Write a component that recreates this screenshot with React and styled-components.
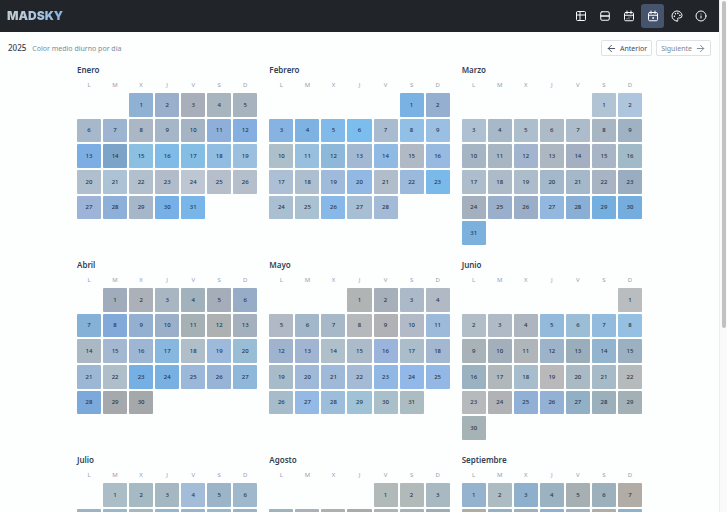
import styled, { createGlobalStyle, css } from 'styled-components';
import { ArrowLeft, ArrowRight, Info, Palette } from 'lucide-react';
import { TbTable } from 'react-icons/tb';

const GlobalStyle = createGlobalStyle`
	* {
		box-sizing: border-box;
	}

	body {
		margin: 0;
		background: #fdfefe;
		color: #334155;
		font-family: 'Noto Sans', 'Open Sans', sans-serif;
		font-size: 7px;
	}
`;

const Viewport = styled.div`
	display: flex;
	height: 100vh;
	overflow: hidden;
`;

const Page = styled.div`
	flex: 1;
	min-width: 0;
	overflow-y: auto;
	scrollbar-width: none;
`;

const ScrollTrack = styled.div`
	width: 8px;
	padding: 1px 1px 0 2px;
	background: #fafafa;
	border-left: 1px solid #ededed;
`;

const ScrollThumb = styled.div`
	height: 64%;
	background: #c1c1c1;
	border-radius: 3px;
`;

const Navbar = styled.header`
	display: flex;
	align-items: center;
	justify-content: space-between;
	height: 32px;
	padding: 0 7px;
	background: #212529;
`;

const Logo = styled.a`
	font-family: Inter, sans-serif;
	font-size: 12px;
	font-weight: 900;
	line-height: 16px;
	text-decoration: none;
	color: transparent;
	background: linear-gradient(90deg, #c3cbd2, #a9c6e0 60%, #7fb2e4);
	background-clip: text;
`;

const Nav = styled.nav`
	display: flex;
	gap: 1px;
`;

const NavButton = styled.button`
	display: grid;
	place-items: center;
	width: 23px;
	height: 24px;
	padding: 0;
	border: none;
	border-radius: 3px;
	color: #f8fafc;
	background: ${({ $active }) => ($active ? '#45546c' : 'transparent')};
	cursor: pointer;

	svg {
		width: 12px;
		height: 12px;
	}
`;

const Toolbar = styled.div`
	display: flex;
	align-items: center;
	justify-content: space-between;
	padding: 8px;
`;

const Heading = styled.div`
	display: flex;
	align-items: baseline;
	gap: 6px;
`;

const Year = styled.h1`
	margin: 0;
	font-size: 8px;
	font-weight: 500;
	line-height: 16px;
`;

const Subtitle = styled.span`
	color: #7b8a9c;
`;

const Pager = styled.div`
	display: flex;
	gap: 4px;
`;

const PagerButton = styled.button`
	display: flex;
	align-items: center;
	gap: 3px;
	height: 16px;
	padding: 0 4px;
	font: inherit;
	color: #3f4a57;
	background: #fff;
	border: 1px solid #dee2e6;
	border-radius: 2px;
	cursor: pointer;

	svg {
		width: 11px;
		height: 11px;
	}

	&:disabled {
		color: #7d858e;
		cursor: default;
	}
`;

const Months = styled.main`
	display: grid;
	grid-template-columns: repeat(3, 1fr);
	gap: 14px 12px;
	max-width: 565px;
	margin: 0 auto;
`;

const Month = styled.section`
	min-width: 0;
`;

const MonthName = styled.h2`
	margin: 0 0 4px;
	font-size: 8px;
	font-weight: 600;
	line-height: 12px;
`;

const Calendar = styled.table`
	display: block;

	tr {
		display: contents;
	}
`;

const weekGrid = css`
	display: grid;
	grid-template-columns: repeat(7, 1fr);
	gap: 2px;
`;

const WeekHead = styled.thead`
	${weekGrid}
	margin-bottom: 2px;
`;

const Weekday = styled.th`
	padding: 0;
	font-size: 6px;
	font-weight: 400;
	line-height: 11px;
	text-align: center;
	color: #94a0af;
`;

const Weeks = styled.tbody`
	${weekGrid}
	grid-template-rows: repeat(6, 1fr);
	height: 152px;
`;

const Day = styled.td`
	display: grid;
	place-items: center;
	padding: 0;
	grid-column: ${({ $column }) => $column};
	font-size: 6px;
	font-weight: 500;
	line-height: 8px;
	color: #26384d;
	background: ${({ $color }) => $color};
	border-radius: 1px;
`;

const StrokeIcon = styled.svg.attrs({ viewBox: '0 0 24 24' })`
	fill: none;
	stroke: currentColor;
	stroke-width: 2;
	stroke-linecap: round;
	stroke-linejoin: round;
`;

function RowsIcon() {
	return (
		<StrokeIcon>
			<rect x="3.5" y="3.5" width="17" height="17" rx="2.5" />
			<path d="M3.5 12h17" strokeWidth="3" />
		</StrokeIcon>
	);
}

function MonthIcon() {
	return (
		<StrokeIcon>
			<rect x="3" y="5" width="18" height="16.5" rx="2.5" />
			<path d="M8 2v5M16 2v5M3 10.5h18" />
			<path d="M12 14h.01M16 14h.01M8 17.5h.01M12 17.5h.01" />
		</StrokeIcon>
	);
}

function YearIcon() {
	return (
		<StrokeIcon>
			<rect x="3" y="5" width="18" height="16.5" rx="2.5" />
			<path d="M8 2v5M16 2v5M3 10.5h18" />
			<circle cx="12" cy="16" r="1" />
		</StrokeIcon>
	);
}

const WEEKDAYS = ['L', 'M', 'X', 'J', 'V', 'S', 'D'];

const VIEWS = [
	{ label: 'Tabla', icon: TbTable },
	{ label: 'Filas', icon: RowsIcon },
	{ label: 'Mes', icon: MonthIcon },
	{ label: 'Año', icon: YearIcon, active: true },
	{ label: 'Colores', icon: Palette },
	{ label: 'Información', icon: Info },
];

// start: weekday of day 1 (0 = lunes); colors: daytime mean, one per day
const MONTHS = [
	{
		name: 'Enero',
		start: 2,
		colors: `8fb1d3 99afcc a9afba a9b5be a8b4bd
			a7b8cb 9eb5d1 abb7c5 a5b6c8 a5b4c5 8fafdb 85aee1
			7caee4 7ba4c8 8bc0e3 80bae6 85bee4 91bde2 9bbfdf
			afbfce abc3d5 b2bfcd b2bbca bec6d3 b7becb b4bfcb
			9db3d8 8dafd8 a6b7ca 77b0e7 78b5e9`,
	},
	{
		name: 'Febrero',
		start: 5,
		colors: `7ab2e3 94afcf
			87b3e2 7eb2e3 7fbaea 7bbdec a9bccf 91bfe5 9bbfe3
			adbfc9 98bfdd 8db8d9 a2b8d3 90b9e3 b1b9c4 98bae0
			adbfd4 adbfce 9fbada 92b9e3 b1bdca 9bb9da 7abaea
			aabfd2 aac1d2 87b8e8 a7bfd5 a3bbd7`,
	},
	{
		name: 'Marzo',
		start: 5,
		colors: `b1c4d4 aec6dd
			adc1d2 a7b9c8 adbecd adbbc9 acbccb a8b5c2 9fb2c3
			a5b5c3 a8b6c3 a3b4ce adb7c1 a4b0c2 a8b5c7 a1bac8
			adbdcb adbac8 acbccb a3b8ca a5b8c9 a8b4c4 9aacc0
			a5b0bf 9aafcc 9baec8 92b8df 8aafd7 75afe0 75addf
			7cb1de`,
	},
	{
		name: 'Abril',
		start: 1,
		colors: `a0acbb acb0b9 a8b6c2 a1b2bc a5adb8 96acc7
			86b1d6 82a9da 93b0d0 9bafc9 a6b1b6 adb1b2 a4b0bd
			aab8c3 a4b8d2 9db6d4 87b6df b0bec9 9db9dc 9abdd6
			9bb7d3 afbec8 75afe3 78b0e2 9bb7da 97b4d6 8fb7d9
			7ca9db a5a9ad a5a8aa`,
	},
	{
		name: 'Mayo',
		start: 3,
		colors: `b1b4b4 a7afba acb9c8 b1b9c4
			b1b9c5 a3b7ca a7b8c9 b6b9bc b0b2b5 b2bac7 9dbadb
			9fb3cf a1b5d3 afc0ca abbbca 9bb4dc abbdca a3b7d1
			a7bbc9 a1b9d8 9fb9d9 a5bbd5 91b7e5 91b8e8 93b8e5
			a7bccb 93b9e4 9dbeda 9fc2d7 a9bfca abbdc3`,
	},
	{
		name: 'Junio',
		start: 6,
		colors: `b9bdbf
			b1bec8 b0bac6 adb5be 93badb 9bbed6 93bbdd 95c0e1
			a7b3b9 a3afbb afb5b8 9db3c9 99adbb 93b4cf 9bb1c2
			9bb2c0 b1b8bb a7bdcb b9b8bb a9bac5 a7bac8 b5babd
			b7babd b1b2b5 91b0d5 92b1d4 91b0c5 9bb0ba a3b1b7
			a5b3b7`,
	},
	{
		name: 'Julio',
		start: 1,
		colors: `abbec8 a6bac4 a5b8c1 a3bdd8 9bb4c8 9fb8cc
			98b4c6 9cb7cc a5b7c1 98b5cd 98b5cb 9bb7cb 9ab3c5`,
	},
	{
		name: 'Agosto',
		start: 4,
		colors: `b1bab9 b1bab8 a8b9c2
			9fb3bf abb1ba b1aeae aaaaac aeb3b4 a6b2b6 9dadb6`,
	},
	{
		name: 'Septiembre',
		start: 0,
		colors: `95b3ce adbbc3 8eb0cc 9bb3c1 a6b0b2 9cb1bc b2aca6
			b2aca7 96b1c4 9fb0b9 8fb0cf 9fb2bd b0aca7 8cb2ce`,
	},
];

function toWeeks({ start, colors }) {
	const weeks = [];
	colors.split(/\s+/).forEach((color, i) => {
		const slot = start + i;
		const week = Math.floor(slot / 7);
		weeks[week] = weeks[week] || [];
		weeks[week].push({ day: i + 1, column: (slot % 7) + 1, color: `#${color}` });
	});
	return weeks;
}

function MonthCalendar({ month }) {
	return (
		<Month>
			<MonthName>{month.name}</MonthName>
			<Calendar aria-label={month.name}>
				<WeekHead>
					<tr>
						{WEEKDAYS.map((d) => (
							<Weekday key={d} scope="col">{d}</Weekday>
						))}
					</tr>
				</WeekHead>
				<Weeks>
					{toWeeks(month).map((week) => (
						<tr key={week[0].day}>
							{week.map(({ day, column, color }) => (
								<Day key={day} $column={column} $color={color}>{day}</Day>
							))}
						</tr>
					))}
				</Weeks>
			</Calendar>
		</Month>
	);
}

export default function App() {
	return (
		<>
			<GlobalStyle />
			<Viewport>
				<Page>
					<Navbar>
						<Logo href="#">MADSKY</Logo>
						<Nav>
							{VIEWS.map(({ label, icon: Icon, active }) => (
								<NavButton key={label} $active={active} aria-label={label}>
									<Icon />
								</NavButton>
							))}
						</Nav>
					</Navbar>

					<Toolbar>
						<Heading>
							<Year>2025</Year>
							<Subtitle>Color medio diurno por día</Subtitle>
						</Heading>
						<Pager>
							<PagerButton>
								<ArrowLeft />
								Anterior
							</PagerButton>
							<PagerButton disabled>
								Siguiente
								<ArrowRight />
							</PagerButton>
						</Pager>
					</Toolbar>

					<Months>
						{MONTHS.map((month) => (
							<MonthCalendar key={month.name} month={month} />
						))}
					</Months>
				</Page>
				<ScrollTrack>
					<ScrollThumb />
				</ScrollTrack>
			</Viewport>
		</>
	);
}
